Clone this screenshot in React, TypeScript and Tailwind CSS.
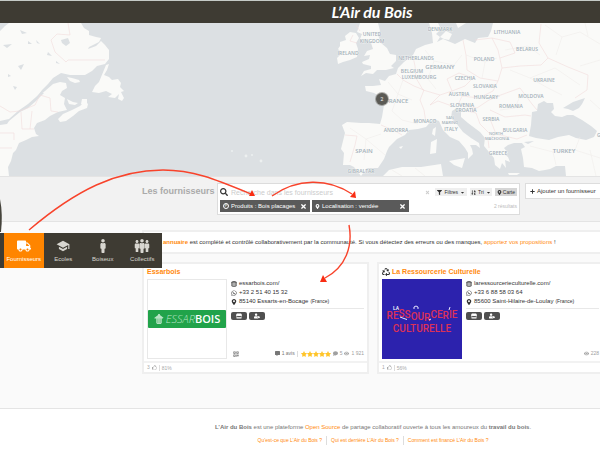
import type { ReactNode } from 'react';
import {
  FaTruck, FaMale, FaSearch, FaTimes, FaFilter, FaSortAlphaDown, FaMapMarkerAlt, FaPlus,
  FaWhatsapp, FaStore, FaCommentAlt, FaComment, FaEye, FaStar, FaRecycle, FaCaretDown, FaRegThumbsUp,
  FaUserTag, FaQrcode,
} from 'react-icons/fa';
import { BsGlobe } from 'react-icons/bs';
import { MdSchool } from 'react-icons/md';

const LABELS: [string, number, number, number][] = [
  ['UNITED', 372, 36, 5], ['KINGDOM', 372, 43, 5], ['IRELAND', 348, 55, 5], ['DENMARK', 440, 31, 5],
  ['LITHUANIA', 507, 34, 5], ['BELARUS', 527, 51, 5], ['NETHERLANDS', 416, 60, 5], ['POLAND', 484, 61, 5],
  ['GERMANY', 440, 69, 6], ['BELGIUM', 412, 73, 5], ['LUXEMBOURG', 419, 79, 5], ['CZECHIA', 465, 80, 5],
  ['UKRAINE', 544, 82, 5], ['SLOVAKIA', 485, 88, 5], ['AUSTRIA', 459, 96, 5], ['HUNGARY', 486, 99, 5],
  ['MOLDOVA', 531, 98, 5], ['FRANCE', 397, 103, 6], ['SLOVENIA', 462, 107, 5], ['CROATIA', 466, 112, 5],
  ['ROMANIA', 511, 108, 5], ['SAN', 450, 119, 4], ['MARINO', 450, 124, 4], ['MONACO', 425, 123, 5],
  ['SERBIA', 491, 121, 5], ['ITALY', 451, 131, 5], ['ANDORRA', 396, 132, 5], ['BULGARIA', 515, 132, 5],
  ['NORTH', 496, 135, 4], ['MACEDONIA', 497, 140, 4], ['SPAIN', 364, 153, 6], ['GREECE', 498, 155, 5],
  ['TURKEY', 564, 153, 6], ['GIBRALTAR', 361, 173, 5], ['GEORGIA', 608, 137, 5],
];

function WorldMap() {
  return (
    <svg className="block h-[153px] w-full bg-[#dce0e3]" viewBox="0 23 600 153" preserveAspectRatio="xMidYMid slice">
      <g fill="#fafaf8">
        <path d="M0 31 5 26 9 23H81L84 28 89 31 89 35 96 37 101 38 99 42 89 47 88 49 96 46 101 41 105 45 109 50 109 59 105 64 97 66 92 71 85 75 70 75 61 73 53 78 48 84 42 90 37 97 45 91 53 84 60 82 66 83 67 88 62 91 60 95 65 98 64 104 67 110 58 112 50 116 45 120 37 123 34 128 36 134 39 136 32 137 26 140 19 143 16 150 13 153 11 161 8 167 9 176H0Z" />
        <path d="M106 65 109 64 107 70 104 75 109 77 112 80 118 79 121 83 120 87 124 91 121 92 124 98 122 101 118 99 119 94 115 98 108 97 112 94 106 91 99 93 92 92 95 86 99 82Z" />
        <path d="M67 77 72 78 79 80 80 82 75 83 70 81ZM58 119 63 114 72 110 80 106 85 101 88 104 87 108 79 111 73 116 66 121 60 122ZM67 99 73 102 78 103 75 105 69 104ZM81 104 82 99 87 99 87 104Z" />
        <path d="M360 23H378L380 31 378 35 381 43 387 48 390 54 396 55 396 61 391 66 394 68 386 70 377 70 373 74 366 73 361 76 364 71 371 69 371 66 363 64 362 62 369 59 370 55 364 56 367 51 373 49 371 43 366 39 360 39 362 34 357 32Z" />
        <path d="M340 42 346 40 345 36 350 32 356 33 359 38 356 43 358 49 357 57 350 60 343 62 338 64 337 58 342 53 338 49 340 46Z" />
        <path d="M429 23 432 33 433 43 425 45 416 49 413 55 404 62 398 68 396 74 389 76 385 81 379 79 381 85 373 86 365 86 366 91 374 93 381 97 384 105 382 117 380 124 369 123 361 123 347 122 342 125 345 133 341 149 344 153 343 165 350 165 354 167 361 176 367 168 378 168 384 159 387 151 389 147 397 139 405 135 409 130 418 129 426 127 433 119 439 121 443 130 450 137 459 141 465 148 468 153 468 159 473 154 472 149 470 145 476 145 480 148 479 143 471 138 463 132 456 123 451 118 452 111 457 108 461 111 461 117 468 123 480 132 485 138 484 146 489 152 494 158 495 165 500 169 502 163 506 168 505 160 510 162 508 157 504 154 508 153 504 148 508 145 514 143 522 143 525 147 521 149 523 158 524 167 532 168 539 171 545 170 550 169 556 166 565 166 566 176H600V23H493L491 31 488 37 478 38 475 43 465 39 455 44 443 39 437 42 440 37 436 34 441 29 438 23Z" />
        <path d="M440 37 446 31 452 34 449 40 444 39ZM449 161 465 158 462 168 454 165ZM431 142 437 139 436 153 430 154ZM433 129 436 127 435 136 432 134ZM383 176 389 170 402 167 421 167 441 164 443 176ZM508 173 520 173 517 175 509 175ZM399 147 403 146 401 149ZM456 23H466L458 28Z" />
      </g>
      <g fill="#dce0e3">
        <path d="M529 136 531 125 532 112 537 111 538 104 544 101 547 103 553 103 554 109 551 112 555 116 562 117 567 115 573 115 582 120 591 126 597 131 594 137 586 140 576 138 569 135 558 137 549 140 536 138Z" />
        <path d="M563 108 573 102 585 98 582 104 579 108 573 111 568 109ZM524 142 534 141 528 144ZM0 121 9 119 18 111 28 104 36 97 41 92 44 93 36 101 28 108 20 112 9 121 7 124 0 125Z" />
        <path d="M61 40 68 38 70 43 66 46 62 43ZM18 66 24 64 21 70ZM3 45 12 44 7 48ZM20 30 27 33 22 34ZM48 52 52 56 47 55ZM13 86 17 87 15 90ZM28 41 32 44 28 44ZM36 40 40 44 37 43ZM56 61 60 64 56 63ZM8 74 11 76 8 77Z" />
      </g>
      <g fill="none" stroke="#f1dcdc" strokeWidth="0.6">
        <path d="M68 23 70 35 57 34 51 40 55 52 66 62 68 60H105M0 106 10 112 20 111 35 105 40 95 50 98 51 111 58 112M21 112 22 129 34 129M32 111 30 129M0 133H14V140M0 148H12" />
        <path d="M345 135 357 136 355 145 350 162M381 125 395 131 402 135M397 74 403 80 414 86 424 90 420 100 424 110 426 123M413 57 415 66 416 78 423 90 440 95 452 91 447 79 459 73 473 78 465 86 452 91M463 40 466 55 467 70 480 78 498 81 502 68 498 50 492 38 475 40M492 38 510 42 515 53 500 58M502 68 520 66 541 65 548 58 539 43 541 24M498 81 493 91 479 98 462 96 458 105 477 108 489 100 500 96M462 110 476 113 480 124 490 134M498 96 520 88 532 104 537 110M490 110 505 117 525 115 531 116M490 119 496 134 488 139 489 148M496 134 517 139 527 135M440 95 430 105 438 101 452 106M548 58 568 67 588 75 587 90 575 98M356 25 360 31M353 35 350 41 357 43" />
      </g>
      <g fill="none" stroke="#efeae8" strokeWidth="0.5">
        <path d="M350 128 366 139 381 134M366 139 364 160M366 139 385 155M388 82 398 94 392 111 402 120 418 124M398 94 412 100M403 80 398 94M425 50 434 61 428 79 436 89M434 61 454 65 462 55M466 55 485 62 497 58M485 62 482 78M505 50 528 46 540 55M510 70 530 78 548 88 562 95M530 78 555 68 580 85M500 110 515 108 520 96M530 146 553 152 575 150 600 158M553 152 556 165M575 150 580 137M545 25 562 37 580 32 600 44M562 37 556 55M600 60 580 66M585 23 588 36M392 170 402 176M415 168 425 176M590 100 600 109M590 150 596 176" />
      </g>
      <g fill="#edf0f0">
        <circle cx="232" cy="151" r="1" /><circle cx="246" cy="156" r="1.4" /><circle cx="252" cy="155" r="1" /><circle cx="261" cy="161" r="1.4" />
      </g>
      <g fill="#a3b0b9" fontFamily="'Open Sans', sans-serif" fontWeight="600" textAnchor="middle" stroke="#fafaf8" strokeWidth="0.6" paintOrder="stroke">
        {LABELS.map(([name, x, y, size]) => <text key={name} x={x} y={y} fontSize={size}>{name}</text>)}
      </g>
      <circle cx="382" cy="99" r="7" fill="#66645d" fillOpacity="0.5" />
      <circle cx="382" cy="99" r="6" fill="#5b5a55" />
      <text x="382" y="101" fontSize="5" fill="#fff" textAnchor="middle" fontFamily="Roboto, sans-serif">2</text>
    </svg>
  );
}

function NavItem({ label, active, children }: { label: string; active?: boolean; children: ReactNode }) {
  return (
    <a href="#" className={`flex h-[35px] min-w-0 flex-1 flex-col items-center pt-[5px] text-[6px] leading-[8px] ${active ? 'bg-[#ff8500] text-white' : 'text-[#d8d6d0]'}`}>
      <span className="mb-[2px] flex h-[15px] items-center justify-center text-[14px]">{children}</span>
      {label}
    </a>
  );
}

function Tag({ icon, text, className }: { icon: ReactNode; text: string; className: string }) {
  return (
    <span className={`flex h-[12px] items-center gap-[2px] bg-[#5a5a5a] px-[3px] text-[6px] text-white ${className}`}>
      {icon}
      <span className="flex-1 whitespace-nowrap">{text}</span>
      <button aria-label={`Retirer ${text}`}><FaTimes className="size-[7px]" /></button>
    </span>
  );
}

function Pill({ children }: { children: ReactNode }) {
  return <span className="flex h-[8px] w-[16px] items-center justify-center rounded-[2px] bg-[#505050] text-[6px] text-white">{children}</span>;
}

type SupplierProps = {
  name: string; icon?: ReactNode; logo: ReactNode; site: string; phone: string; place: string;
  stats: ReactNode; qr?: boolean; likes: string; percent: string;
};

function Supplier({ name, icon, logo, site, phone, place, stats, qr, likes, percent }: SupplierProps) {
  return (
    <article className="border-2 border-[#efefef] bg-white">
      <h2 className="flex h-[15px] items-center gap-[2px] px-[3px] text-[7px] leading-[12px] font-bold text-[#ff8a0d]">
        {icon}<a href="#">{name}</a>
      </h2>
      <div className="flex gap-[4px] px-[3px]">
        <div className="size-[80px] shrink-0">{logo}</div>
        <div className="flex min-w-0 flex-1 flex-col text-[6px] leading-[9px] text-[#333]">
          <a href="#" className="flex items-center gap-[2px]"><BsGlobe className="size-[6px]" />{site}</a>
          <span className="flex items-center gap-[2px]"><FaWhatsapp className="size-[6px]" />{phone}</span>
          <span className="flex items-center gap-[2px] whitespace-nowrap"><FaMapMarkerAlt className="size-[6px]" />{place} <small className="text-[5px]">(France)</small></span>
          <hr className="mt-[2px] border-[#e8e8e8]" />
          <div className="mt-[3px] flex gap-[2px]"><Pill><FaStore /></Pill><Pill><FaUserTag /></Pill></div>
          <div className="mt-auto flex items-center pb-px text-[5px] text-[#a0a0a0]">
            {qr && <FaQrcode className="ml-[2px] size-[6px] text-[#777]" />}
            <span className="ml-auto flex items-center gap-[2px]">{stats}</span>
          </div>
        </div>
      </div>
      <footer className="mt-[2px] flex h-[11px] items-center gap-[2px] border-t-2 border-[#f2f2f2] px-[3px] text-[5px] text-[#aaa]">
        {likes}<FaRegThumbsUp className="size-[5px]" /><span className="border-l border-[#ddd] pl-[2px] leading-[6px]">{percent}</span>
      </footer>
    </article>
  );
}

function EssarboisLogo() {
  return (
    <div className="flex h-full items-center border border-[#e8e8e8] bg-white">
      <div className="flex h-[18px] w-full items-center justify-center gap-[2px] rounded-[1px] bg-[#21a34a] font-['Open_Sans',sans-serif] text-[11px] leading-[18px] text-[#b9e3c5]">
        <svg viewBox="0 0 10 11" className="size-[10px]" fill="currentColor"><path d="M4 0h2v1l4 3-1 1H8v5l-1 1H3l-1-1V5H0V4l4-3z" /><path d="M3.500 5v5M5 5v5M6.500 5v5" stroke="#21a34a" strokeWidth=".4" /></svg>
        <span><em className="font-light">ESSAR</em><b className="font-semibold text-white">BOIS</b></span>
      </div>
    </div>
  );
}

function RessourcerieLogo() {
  return (
    <svg viewBox="0 0 80 80" className="size-full bg-[#2c22ad]" fontFamily="Roboto, sans-serif" fontWeight="500" textAnchor="middle">
      <text x="40" y="40" fontSize="10" fill="#dc3157">
        RE<tspan dy="-2">S</tspan><tspan dy="1">S</tspan><tspan dy="2">O</tspan>U<tspan dy="1">R</tspan><tspan dy="-3">C</tspan>E<tspan dy="1">R</tspan><tspan dy="-1">I</tspan>E
      </text>
      <text x="40" y="53" fontSize="10" fill="#dc3157">CULTURELLE</text>
      <text x="14" y="31" fontSize="5" fill="#fff">LA</text>
      <path d="M18 38l4 1.500 3 1M32 30v-2l2-1 2 1v2M47 41l2-1M67 31l1-3" fill="none" stroke="#e7e5ff" strokeWidth="1" />
    </svg>
  );
}

function Overlay() {
  return (
    <svg className="pointer-events-none absolute top-0 left-0 h-[450px] w-[600px]" viewBox="0 0 600 450" fill="none" stroke="#f8432b" strokeWidth="1.400">
      <path d="M0 199Q3 214 1 232H0Z" fill="#46443c" stroke="none" />
      <path d="M29 230C76 190 117 170 163 170C194 170 217 180 251 194" />
      <path d="M272 196C297 178 328 178 352 194" />
      <path d="M349 225C353 246 346 267 325 278" />
      <g fill="#f92d13" stroke="none">
        <path d="M255 196l-3-6-3 6z" /><path d="M356 198l-1-7-5 6z" /><path d="M320 282l3-7 4 7z" />
      </g>
    </svg>
  );
}

export default function App() {
  return (
    <div className="relative min-h-[450px] overflow-hidden bg-white font-['Liberation_Sans',sans-serif] text-[6px] leading-[9px] text-[#333]">
      <header className="flex h-[23px] items-center justify-center border-t border-[#c5cac7] bg-[#3e3b33] pl-[144px]">
        <a href="#" className="font-['Lato',cursive] text-[16px] leading-[20px] font-bold text-white italic">L’Air du Bois</a>
      </header>
      <WorldMap />

      <section className="-mr-[4px] flex h-[46px] items-start border-y border-[#e4e4e4] bg-[#f2f2f2] pt-[6px] pl-[142px]">
        <h1 className="w-[75px] shrink-0 text-[9px] leading-[16px] font-bold text-[#aaa]">Les fournisseurs</h1>
        <div className="min-w-0 flex-1 border border-[#dcdcdc] bg-white">
          <div className="flex h-[16px] items-center px-[2px]">
            <FaSearch className="size-[8px] shrink-0" />
            <input aria-label="Recherche" placeholder="Recherche dans les fournisseurs" className="ml-[3px] min-w-0 flex-1 text-[7px] outline-none placeholder:text-[#ccc]" />
            <button aria-label="Effacer" className="mr-[5px] text-[#ccc]"><FaTimes className="size-[5px]" /></button>
            <button className="flex h-[8px] items-center gap-[2px] bg-[#efefef] px-[2px] text-[5px]"><FaFilter />Filtres <FaCaretDown /></button>
            <button className="ml-[3px] flex h-[8px] items-center gap-[2px] bg-[#efefef] px-px text-[5px]"><FaSortAlphaDown />Tri <FaCaretDown /></button>
            <button className="ml-[3px] flex h-[8px] items-center gap-px bg-[#d6d6d6] px-[2px] text-[5px]"><FaMapMarkerAlt />Carte</button>
          </div>
          <div className="flex h-[14px] items-start gap-[2px] px-[2px]">
            <Tag className="w-[90px]" icon={<span className="flex size-[6px] items-center justify-center rounded-full border border-white text-[4px] leading-none">P</span>} text="Produits : Bois placages" />
            <Tag className="w-[97px]" icon={<FaMapMarkerAlt className="size-[5px]" />} text="Localisation : vendée" />
            <span className="ml-auto text-[5px] leading-[12px] text-[#bbb]">2 résultats</span>
          </div>
        </div>
        <button className="ml-[5px] flex h-[16px] w-[79px] items-center gap-[2px] border border-[#ddd] bg-white pl-[4px] text-[6px] whitespace-nowrap"><FaPlus className="size-[5px]" />Ajouter un fournisseur</button>
      </section>

      <main className="border-b border-[#e4e4e4] bg-[#fafafa] pb-[34px]">
        <div className="-mr-[4px] pt-[8px] pl-[142px]">
          <p className="mb-[8px] border-2 border-[#efefef] bg-white pt-[6px] pb-[5px] pl-[8px] whitespace-nowrap">
            Cet <a href="#" className="font-bold text-[#ff8a0d]">annuaire</a> est complété et contrôlé collaborativement par la communauté. Si vous détectez des erreurs ou des manques, <a href="#" className="text-[#ff8a0d]">apportez vos propositions</a> !
          </p>
          <div className="grid grid-cols-2 gap-[8px]">
            <Supplier
              name="Essarbois" logo={<EssarboisLogo />} site="essarbois.com/" phone="+33 2 51 40 15 32" place="85140 Essarts-en-Bocage" qr likes="3" percent="81%"
              stats={<>
                <FaCommentAlt className="text-[#777]" /><span className="text-[#777]">1 avis</span>
                <span className="flex border-l border-[#ddd] pl-[3px] text-[6px] text-[#ffc52b]">{[1, 2, 3, 4, 5].map((n) => <FaStar key={n} />)}</span>
                <FaComment />5<FaEye />1 921
              </>}
            />
            <Supplier
              name="La Ressourcerie Culturelle" icon={<FaRecycle className="size-[8px] text-[#333]" />} logo={<RessourcerieLogo />}
              site="laressourcerieculturelle.com/" phone="+33 6 88 58 03 64" place="85600 Saint-Hilaire-de-Loulay" likes="1" percent="56%"
              stats={<><FaEye />228</>}
            />
          </div>
        </div>
      </main>

      <footer className="flex flex-col items-center pt-[14px] pl-[146px] whitespace-nowrap text-[#777]">
        <p><b>L’Air du Bois</b> est une plateforme <a href="#" className="text-[#ff8a0d]">Open Source</a> de partage collaboratif ouverte à tous les amoureux du <b>travail du bois</b>.</p>
        <p className="mt-[4px] flex gap-[4px] text-[5px] text-[#ff8a0d]">
          <a href="#">Qu’est-ce que L’Air du Bois ?</a>
          <a href="#" className="border-l border-[#ddd] pl-[4px]">Qui est derrière L’Air du Bois ?</a>
          <a href="#" className="border-l border-[#ddd] pl-[4px]">Comment est financé L’Air du Bois ?</a>
        </p>
      </footer>

      <nav className="absolute top-[233px] left-0 flex w-[162px] bg-[#3e3b33] pl-[4px]">
        <NavItem label="Fournisseurs" active><FaTruck /></NavItem>
        <NavItem label="Ecoles"><MdSchool /></NavItem>
        <NavItem label="Boiseux"><FaMale /></NavItem>
        <NavItem label="Collectifs"><FaMale className="-mr-[8px] size-[12px]" /><FaMale /><FaMale className="-ml-[8px] size-[12px]" /></NavItem>
      </nav>
      <Overlay />
    </div>
  );
}
